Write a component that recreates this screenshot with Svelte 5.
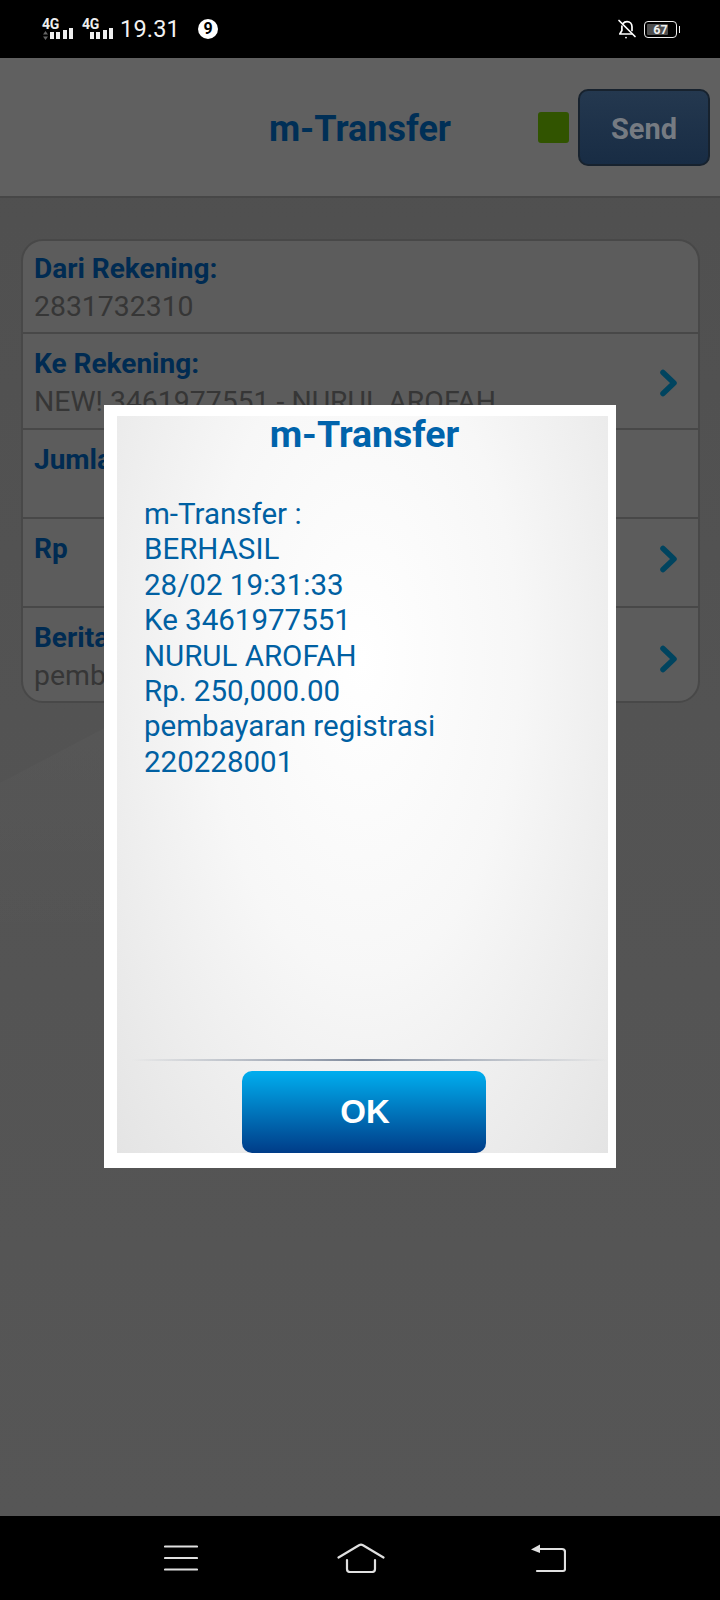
<script>
  const rows = [
    { label: 'Dari Rekening:', value: '2831732310', h: 91 },
    { label: 'Ke Rekening:', value: 'NEW! 3461977551 - NURUL AROFAH', h: 96, chevron: -8 },
    { label: 'Jumlah:', value: '', h: 89 },
    { label: 'Rp', value: '', h: 89, chevron: -18 },
    { label: 'Berita:', value: 'pembayaran registrasi', h: 95, chevron: -3 }
  ];
  const lines = ['m-Transfer :', 'BERHASIL', '28/02 19:31:33', 'Ke 3461977551', 'NURUL AROFAH', 'Rp. 250,000.00', 'pembayaran registrasi', '220228001'];
</script>

<div class="phone">
  <div class="status">
    <div class="side">
      <div class="net">
        <span class="g">4G</span>
        <svg class="updown" width="5" height="9" viewBox="0 0 5 9" fill="#666"><path d="M2.5 0 5 3.5H0ZM2.5 9 0 5.5H5Z"/></svg>
        <span class="bars"><i></i><i></i><i class="b3"></i><i class="b4"></i></span>
      </div>
      <div class="net">
        <span class="g">4G</span>
        <span class="bars"><i></i><i></i><i class="b3"></i><i class="b4"></i></span>
      </div>
      <span class="time">19.31</span>
      <span class="badge">9</span>
    </div>
    <div class="side">
      <svg width="20" height="21" viewBox="0 0 20 21" fill="none" stroke="#fff" stroke-width="1.7" stroke-linecap="round" stroke-linejoin="round">
        <path d="M6 4.5C7 3.2 8.4 2.6 10 2.6c3 0 5 2.2 5 5.2v3.6"/>
        <path d="M4.9 7.2v4.3L2.8 15h11.6"/>
        <path d="M2 1.5 18 17.5"/>
        <circle cx="9" cy="18.6" r=".9" fill="#fff" stroke="none"/>
      </svg>
      <span class="battery"><span class="fill"></span><span class="pct">67</span></span>
    </div>
  </div>

  <main class="screen">
    <header class="head">
      <h1>m-Transfer</h1>
      <div class="actions">
        <span class="led"></span>
        <button class="send">Send</button>
      </div>
    </header>

    <div class="wedge"></div>

    <section class="card">
      {#each rows as r}
        <div class="row" style="height:{r.h}px">
          <div class="txt">
            <div class="label">{r.label}</div>
            {#if r.value}<div class="value">{r.value}</div>{/if}
          </div>
          {#if r.chevron}
            <svg class="chev" style="margin-top:{r.chevron}px" width="20" height="28" viewBox="0 0 20 28" fill="none" stroke="#00445f" stroke-width="5.5" stroke-linecap="round" stroke-linejoin="round">
              <path d="M4 3.5 15 14 4 24.5"/>
            </svg>
          {/if}
        </div>
      {/each}
    </section>

    <div class="dialog">
      <div class="inner">
        <div class="dtitle">m-Transfer</div>
        <div class="body">
          {#each lines as l}<div>{l}</div>{/each}
        </div>
        <div class="rule"></div>
        <div class="foot"><button class="ok">OK</button></div>
      </div>
    </div>
  </main>

  <nav class="nav">
    <svg width="34" height="28" viewBox="0 0 34 28" fill="none" stroke="#e0e0e0" stroke-width="2.2" stroke-linecap="round"><path d="M1 2.5H33M1 14H33M1 25.5H33"/></svg>
    <svg class="home" width="48" height="30" viewBox="0 0 48 30" fill="none" stroke="#e0e0e0" stroke-width="2.2" stroke-linecap="round" stroke-linejoin="round"><path d="M1.5 14.5 22 2.2Q24 1.2 26 2.2L46.5 14.5"/><path d="M10 17v9q0 3 3 3h22q3 0 3-3v-9"/></svg>
    <svg width="36" height="30" viewBox="0 0 36 30" fill="none"><path d="M1 6.5 10 1.5V10Z" fill="#e0e0e0"/><path d="M8 6h24q3 0 3 3v17q0 2-2 2H7" stroke="#e0e0e0" stroke-width="2.2" stroke-linecap="round"/></svg>
  </nav>
</div>

<style>
  :global(body) { margin: 0; background: #000; }
  .phone { width: 720px; height: 1600px; display: flex; flex-direction: column; font-family: Roboto, sans-serif; overflow: hidden; }

  .status { height: 58px; background: #000; color: #fff; display: flex; justify-content: space-between; align-items: center; padding: 0 43px 0 42px; box-sizing: border-box; flex: none; }
  .side { display: flex; align-items: center; }
  .net { width: 40px; height: 22px; position: relative; }
  .g { position: absolute; left: 0; top: 0; font-size: 14px; line-height: 12px; font-weight: 700; color: #eee; letter-spacing: -.4px; }
  .updown { position: absolute; left: 1px; bottom: 0; }
  .bars { position: absolute; left: 8px; bottom: 1px; display: flex; gap: 2.4px; align-items: flex-end; }
  .bars i { width: 4px; height: 7px; background: #eee; display: block; }
  .bars i.b3 { height: 9px; }
  .bars i.b4 { height: 11px; }
  .time { font-size: 23.5px; letter-spacing: .2px; color: #f2f2f2; margin-left: -2px; }
  .badge { width: 20px; height: 20px; border-radius: 50%; background: #fff; color: #000; font-size: 16px; font-weight: 700; line-height: 20px; text-align: center; margin-left: 18px; }
  .battery { width: 31px; height: 15px; border: 1.5px solid #eee; border-radius: 4px; margin-left: 7px; position: relative; display: block; }
  .battery::after { content: ''; position: absolute; right: -4px; top: 4px; width: 1.5px; height: 7px; background: #eee; }
  .fill { position: absolute; left: 2px; top: 2px; bottom: 2px; width: 21px; background: #4d4d4d; border-radius: 1px; }
  .pct { position: absolute; inset: 0; text-align: center; font-size: 12.5px; font-weight: 700; line-height: 15px; color: #eee; }

  .screen { flex: 1; position: relative; background: linear-gradient(180deg, #4f4f4f, #535353 45%, #565656); min-height: 0; }
  .head { height: 140px; box-sizing: border-box; background: #606060; border-bottom: 2px solid #474747; position: relative; display: flex; justify-content: flex-end; align-items: center; padding: 0 10px 0 0; }
  h1 { position: absolute; left: 0; right: 0; top: 51px; margin: 0; text-align: center; font-size: 36px; line-height: 40px; font-weight: 700; color: #002f56; }
  .actions { display: flex; align-items: center; gap: 9px; margin-top: 1px; position: relative; }
  .led { width: 31px; height: 31px; background: #315400; border-radius: 3px; }
  .send { width: 132px; height: 77px; border-radius: 10px; border: 2px solid #17222e; background: linear-gradient(180deg, #24384f, #182c44); color: #767b82; font: 700 29px Roboto, sans-serif; padding: 3px 0 0; }

  .card { position: relative; z-index: 1; margin: 41px 20px 0 21px; background: #5c5c5c; border: 2px solid #484848; border-radius: 22px; overflow: hidden; }
  .row { box-sizing: border-box; border-top: 2px solid #484848; display: flex; align-items: flex-start; justify-content: space-between; padding: 11px 19px 0 11px; overflow: hidden; }
  .row:first-child { border-top: none; padding-top: 9px; }
  .label { font-size: 28px; line-height: 38px; font-weight: 700; color: #002b52; white-space: nowrap; }
  .value { font-size: 28.4px; line-height: 38px; color: #363636; white-space: nowrap; }
  .chev { align-self: center; }

  .wedge { position: absolute; left: 0; top: 612px; width: 215px; height: 288px; background: linear-gradient(180deg, rgba(255,255,255,.025), rgba(255,255,255,0)); clip-path: polygon(0 113px, 100% 0, 100% 100%, 0 100%); }

  .dialog { position: absolute; z-index: 2; left: 104px; top: 347px; width: 512px; height: 763px; background: #fff; box-sizing: border-box; padding: 11px 8px 15px 13px; }
  .inner { height: 100%; display: flex; flex-direction: column; background: radial-gradient(ellipse at 50% 33%, #fff 0%, #f7f7f7 45%, #e4e4e4 100%); }
  .dtitle { text-align: center; font-size: 37.5px; line-height: 40px; font-weight: 700; color: #0063ab; height: 40px; margin-top: -2px; padding-left: 4px; }
  .body { flex: 1; padding: 43px 0 0 27px; font-size: 29.5px; line-height: 35.4px; color: #0060a2; }
  .rule { height: 2px; background: linear-gradient(90deg, transparent 3%, #7f8a9c 50%, transparent 100%); }
  .foot { height: 92px; display: flex; justify-content: center; align-items: flex-end; padding-left: 2px; }
  .ok { width: 244px; height: 82px; border: none; border-radius: 10px; background: linear-gradient(180deg, #00aeef, #003c88); color: #fff; font: 700 33px "Liberation Sans", sans-serif; padding: 0 0 0 3px; }

  .nav { height: 84px; flex: none; background: #000; display: flex; align-items: center; justify-content: space-between; padding: 0 154px 0 164px; box-sizing: border-box; }
  .home { margin: 0 3px 0 -3px; }
</style>
